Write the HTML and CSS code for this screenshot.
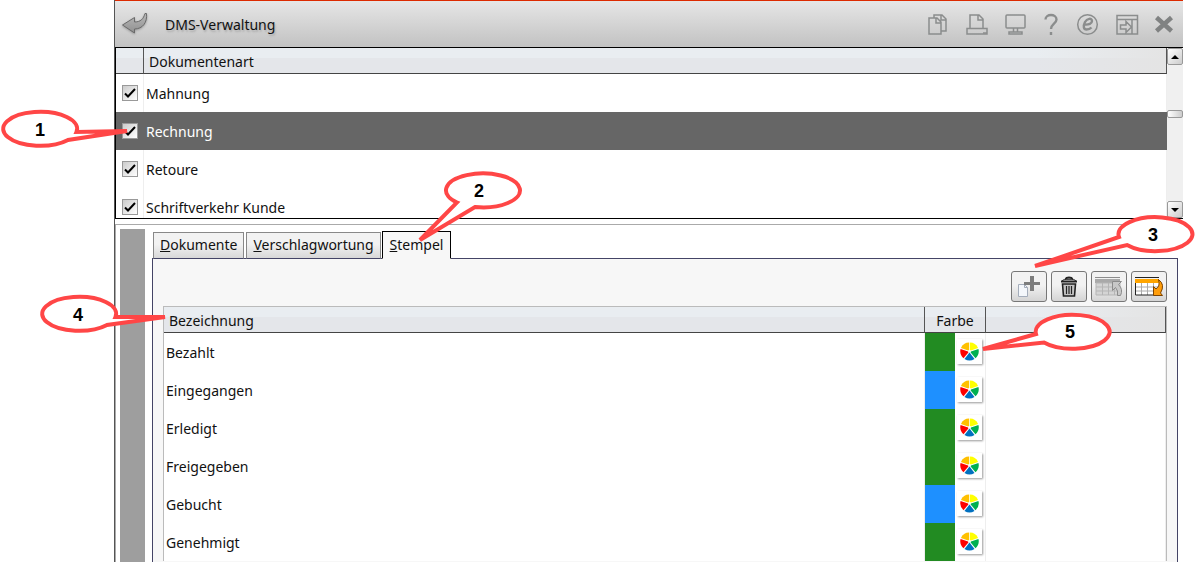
FILE: index.html
```
<!DOCTYPE html>
<html lang="de">
<head>
    <meta charset="UTF-8">
    <meta name="viewport" content="width=device-width, initial-scale=1.0">
    <title>DMS-Verwaltung</title>
    <link rel="stylesheet" href="styles.css">
</head>
<body>
    <svg class="symbols" aria-hidden="true">
        <symbol id="wheel" viewBox="0 0 20 20">
            <path fill="#ffc000" d="M9.600 8.500V.5A9.500 9.500 0 0 0 1 6.200L8.500 9z"/>
            <path fill="#ffff00" d="M10.400 8.500V.5A9.500 9.500 0 0 1 19 6.200L11.500 9z"/>
            <path fill="#ff0000" d="M8.500 10L.6 7.400A9.500 9.500 0 0 0 3.700 17L8.800 11z"/>
            <path fill="#00b050" d="M11.500 10L19.400 7.400A9.500 9.500 0 0 1 16.300 17L11.200 11z"/>
            <path fill="#0070c0" d="M10 11L4.700 17.800A9.500 9.500 0 0 0 15.300 17.800z"/>
        </symbol>
    </svg>

    <main class="window">
        <header class="titlebar">
            <button class="back" aria-label="Zurück">
                <svg width="28" height="24" viewBox="0 0 28 24">
                    <defs>
                        <linearGradient id="arrow" x1="0" y1="0" x2="0" y2="1">
                            <stop offset="0" stop-color="#b8b8b8"/>
                            <stop offset="1" stop-color="#909090"/>
                        </linearGradient>
                    </defs>
                    <path d="M1.500 13L13.500 5.500V10c6 0 9-3 10.500-8.500h1.500c1 9-4 15.500-12 15.500v4z" fill="url(#arrow)" stroke="#6a6a6a"/>
                </svg>
            </button>
            <h1>DMS-Verwaltung</h1>
            <div class="actions">
                <button aria-label="Kopieren">
                    <svg viewBox="0 0 28 28">
                        <path d="M12 8V5h8l4 4v12h-5M19 5v5h5M7 8h8l4 4v12H7zM14 8v5h5"/>
                    </svg>
                </button>
                <button aria-label="Drucken">
                    <svg viewBox="0 0 28 28">
                        <path d="M10 18V5h9l4 4v9M18 5v5h5M7 18.500h20V24H7z"/>
                        <path d="M23 23h4"/>
                    </svg>
                </button>
                <button aria-label="Bildschirm">
                    <svg viewBox="0 0 28 28">
                        <rect x="8" y="5" width="19" height="13" rx="1"/>
                        <path d="M15.500 18v4M19.500 18v4M11 22h13v2H11z"/>
                    </svg>
                </button>
                <button aria-label="Hilfe">
                    <svg viewBox="0 0 28 28">
                        <path class="thick" d="M9.500 9.500c0-6 11-6 11 0 0 4-5.500 4.500-5.500 9.500M15 22v3"/>
                    </svg>
                </button>
                <button aria-label="Online">
                    <svg viewBox="0 0 28 28">
                        <circle cx="13.500" cy="14.500" r="9.800"/>
                        <path class="thick" d="M10 14.500c5 .5 8-1 8-3.500 0-3.500-5-2.500-7 1-2 4-1.500 7.500 1.500 7.500 2 0 3.500-.5 5-2"/>
                    </svg>
                </button>
                <button aria-label="Fenster">
                    <svg viewBox="0 0 28 28">
                        <path d="M5 5.500h20.500V24H5zM5 9.500h20.500M20 9.500V24M8.500 15H14v-3.500l5.500 5.500-5.500 5.500V19H8.500z"/>
                    </svg>
                </button>
                <button aria-label="Schließen">
                    <svg viewBox="0 0 28 28">
                        <path class="cross" d="M6.500 7.500l15 13.500M21.500 7.500l-15 13.500"/>
                    </svg>
                </button>
            </div>
        </header>

        <section class="types">
            <div class="types-list">
                <table class="grid">
                    <colgroup>
                        <col class="col-check">
                        <col>
                    </colgroup>
                    <thead>
                        <tr><th></th><th>Dokumentenart</th></tr>
                    </thead>
                    <tbody>
                        <tr>
                            <td><input type="checkbox" id="mahnung" checked></td>
                            <td><label for="mahnung">Mahnung</label></td>
                        </tr>
                        <tr class="selected">
                            <td><input type="checkbox" id="rechnung" checked></td>
                            <td><label for="rechnung">Rechnung</label></td>
                        </tr>
                        <tr>
                            <td><input type="checkbox" id="retoure" checked></td>
                            <td><label for="retoure">Retoure</label></td>
                        </tr>
                        <tr>
                            <td><input type="checkbox" id="schrift" checked></td>
                            <td><label for="schrift">Schriftverkehr Kunde</label></td>
                        </tr>
                    </tbody>
                </table>
            </div>
            <div class="scrollbar">
                <button aria-label="Nach oben"><svg width="8" height="4" viewBox="0 0 8 4"><path d="M0 4l4-4 4 4z"/></svg></button>
                <div class="track"><div class="thumb"></div></div>
                <button aria-label="Nach unten"><svg width="8" height="4" viewBox="0 0 8 4"><path d="M0 0h8L4 4z"/></svg></button>
            </div>
        </section>

        <section class="details">
            <div class="splitter"></div>
            <div class="tabbed">
                <div class="tabs" role="tablist">
                    <button role="tab"><u>D</u>okumente</button>
                    <button role="tab"><u>V</u>erschlagwortung</button>
                    <button role="tab" class="active" aria-selected="true"><u>S</u>tempel</button>
                </div>
                <div class="panel">
                    <div class="tools">
                        <button aria-label="Neu" disabled>
                            <svg width="28" height="26" viewBox="0 0 28 26">
                                <path d="M3.500 10.500h6l3 3v9h-9z" fill="#f4f7fb" stroke="#a4adbb"/>
                                <path d="M9.500 10.500v3h3" fill="none" stroke="#a4adbb"/>
                                <path d="M15 2h4v6h6v3h-6v6h-4v-6H9V8h6z" fill="#7d7d7d"/>
                            </svg>
                        </button>
                        <button aria-label="Löschen">
                            <svg width="28" height="26" viewBox="0 0 28 26">
                                <path d="M6 7.500h16M10.500 5c1-2 6-2 7 0" fill="none" stroke="#222" stroke-width="2"/>
                                <path d="M7 7c1-2.500 13-2.500 14 0" fill="#888" stroke="#222"/>
                                <path d="M7.500 10h13l-1 12h-11z" fill="#c4c4c4" stroke="#222" stroke-width="1.600"/>
                                <path d="M11.500 12v8M14 12v8M16.500 12v8" stroke="#222" stroke-width="1.200"/>
                            </svg>
                        </button>
                        <button aria-label="Tabelle laden" disabled>
                            <svg width="28" height="26" viewBox="0 0 28 26">
                                <path d="M0 3h25v1H0z" fill="#8c8c8c"/>
                                <path d="M0 5h25v4H0z" fill="#a9a9a9"/>
                                <path d="M1 9h24v12H1zM1 13h24M1 17h24M7.500 9v12M13.500 9v12M19.500 9v12" fill="#d4d4d4" stroke="#b5b5b5"/>
                                <path d="M17.500 7.500h9l-3 3q5 5 2 11h-3q1-5-2-8l-3 3z" fill="#c8c8c8" stroke="#8c8c8c"/>
                            </svg>
                        </button>
                        <button aria-label="Tabelle speichern">
                            <svg width="28" height="26" viewBox="0 0 28 26">
                                <path d="M0 3h24v1H0z" fill="#222"/>
                                <path d="M0 5h24v4H0z" fill="#ffa500"/>
                                <path d="M1 9h23v12H1z" fill="#fff"/>
                                <path d="M0 13h24M0 17h24M6.500 9v12M12.500 9v12M18.500 9v12" stroke="#aaa"/>
                                <path d="M.5 9v12H24" fill="none" stroke="#222"/>
                                <path d="M23.500 5.500q7 5 2 13.500l2 2.500h-9v-9l2.500 2.500q4.500-3 2.500-9.500z" fill="#ff9d0a" stroke="#7d4300"/>
                            </svg>
                        </button>
                    </div>
                    <table class="grid stamps">
                        <colgroup>
                            <col>
                            <col class="col-color">
                            <col class="col-rest">
                        </colgroup>
                        <thead>
                            <tr><th>Bezeichnung</th><th class="center">Farbe</th><th></th></tr>
                        </thead>
                        <tbody>
                            <tr>
                                <td>Bezahlt</td>
                                <td><div class="color green"><button aria-label="Farbe wählen"><svg><use href="#wheel"/></svg></button></div></td>
                                <td></td>
                            </tr>
                            <tr>
                                <td>Eingegangen</td>
                                <td><div class="color blue"><button aria-label="Farbe wählen"><svg><use href="#wheel"/></svg></button></div></td>
                                <td></td>
                            </tr>
                            <tr>
                                <td>Erledigt</td>
                                <td><div class="color green"><button aria-label="Farbe wählen"><svg><use href="#wheel"/></svg></button></div></td>
                                <td></td>
                            </tr>
                            <tr>
                                <td>Freigegeben</td>
                                <td><div class="color green"><button aria-label="Farbe wählen"><svg><use href="#wheel"/></svg></button></div></td>
                                <td></td>
                            </tr>
                            <tr>
                                <td>Gebucht</td>
                                <td><div class="color blue"><button aria-label="Farbe wählen"><svg><use href="#wheel"/></svg></button></div></td>
                                <td></td>
                            </tr>
                            <tr>
                                <td>Genehmigt</td>
                                <td><div class="color green"><button aria-label="Farbe wählen"><svg><use href="#wheel"/></svg></button></div></td>
                                <td></td>
                            </tr>
                        </tbody>
                    </table>
                </div>
            </div>
        </section>
    </main>

    <!-- numbered callouts -->
    <svg class="callouts" width="1195" height="562" viewBox="0 0 1195 562">
        <path d="M68 140A37 17 0 1 1 76.500 132L127 131z"/>
        <path d="M457 202.500A37 17 0 1 1 475 207L420 240z"/>
        <path d="M1119 237A37 17 0 1 1 1127 245L1035 266z"/>
        <path d="M107 325A37 17 0 1 1 115.500 317L165 317z"/>
        <path d="M1036 334A37 17 0 1 1 1044 342.500L983 349z"/>
        <text x="40" y="136">1</text>
        <text x="479" y="197">2</text>
        <text x="1153" y="241">3</text>
        <text x="78" y="321">4</text>
        <text x="1070" y="338">5</text>
    </svg>
</body>
</html>
```
FILE: styles.css
```
* {
    box-sizing: border-box;
}
body {
    margin: 0;
    overflow: hidden;
    background-color: #fff;
    color: #111;
    font-family: 'Segoe UI', 'Noto Sans', sans-serif;
    font-size: 14px;
}
button {
    font: inherit;
    color: inherit;
    padding: 0;
    border: none;
    background: none;
}
.symbols {
    display: none;
}
.window {
    display: flex;
    flex-direction: column;
    height: 100vh;
    margin: 0 12px 0 114px;
    border-left: 1px solid #555;
}

/* title bar */
.titlebar {
    display: flex;
    align-items: center;
    flex: none;
    height: 48px;
    padding: 0 5px 0 6px;
    border-top: 1px solid #dc2a00;
    border-bottom: 1px solid #000;
    background: linear-gradient(#e6e6e6, #c2c2c2);
}
.titlebar h1 {
    margin: 0 0 0 16px;
    font-size: 14px;
    font-weight: normal;
    text-shadow: 1px 2px 2px #aaa;
}
.back svg {
    display: block;
    filter: drop-shadow(0 1px 1px #999);
}
.actions {
    display: flex;
    gap: 10px;
    margin-left: auto;
}
.actions svg {
    display: block;
    width: 28px;
    height: 28px;
    fill: none;
    stroke: #8b8d8d;
    stroke-width: 1.5;
}
.actions .thick {
    stroke-width: 2.4;
}
.actions .cross {
    stroke: #808282;
    stroke-width: 4.5;
}

/* tables */
.grid {
    width: 100%;
    table-layout: fixed;
    border-collapse: separate;
    border-spacing: 0;
}
.grid th {
    height: 26px;
    padding: 2px 5px 0;
    border-right: 1px solid #555;
    border-bottom: 1px solid #444;
    background: linear-gradient(#e9edf1 40%, #e4e6ea 40%);
    font-weight: normal;
    text-align: left;
}
.grid th:last-child {
    background: linear-gradient(90deg, transparent calc(100% - 130px), #e4e4e4), linear-gradient(#e9edf1 40%, #e4e6ea 40%);
}
.grid th.center {
    text-align: center;
}
.grid td {
    height: 38px;
    padding: 0 2px;
    border-right: 1px solid #eee;
}
.grid .selected td {
    border-color: #666;
    background-color: #666;
    color: #fff;
}
.col-check {
    width: 28px;
}
.col-color {
    width: 61px;
}
.col-rest {
    width: 180px;
}
.types {
    display: flex;
    flex: none;
    height: 171px;
    border-left: 1px solid #000;
    border-bottom: 1px solid #000;
}
.types-list {
    flex: 1;
    overflow: hidden;
}
input[type="checkbox"] {
    display: block;
    appearance: none;
    width: 16px;
    height: 16px;
    margin: 0 0 0 4px;
    border: 1px solid #999;
    background: url("data:image/svg+xml,%3Csvg xmlns='http://www.w3.org/2000/svg' viewBox='0 0 14 14'%3E%3Cpath d='M2 7.500l3 3L12 3' fill='none' stroke='%23000' stroke-width='2'/%3E%3C/svg%3E"), linear-gradient(135deg, #ccc, #fff);
}

/* scrollbar */
.scrollbar {
    display: flex;
    flex-direction: column;
    width: 16px;
}
.scrollbar button {
    display: flex;
    align-items: center;
    justify-content: center;
    height: 17px;
    border: 1px solid #999;
    border-radius: 2px;
    background: linear-gradient(135deg, #fff, #ccc);
}
.track {
    flex: 1;
    padding-top: 45px;
    background-color: #f0f0f0;
}
.thumb {
    height: 8px;
    border: 1px solid #999;
    border-radius: 2px;
    background: linear-gradient(90deg, #fff, #ccc);
}

/* lower part */
.details {
    display: flex;
    flex: 1;
    gap: 7px;
    min-height: 0;
    margin-top: 5px;
    padding: 4px 5px 0;
    border-top: 1px solid #aaa;
    border-left: 1px solid #aaa;
}
.splitter {
    width: 25px;
    margin-left: -1px;
    background-color: #9e9e9e;
}
.tabbed {
    display: flex;
    flex: 1;
    flex-direction: column;
    padding-top: 2px;
}
.tabs {
    display: flex;
    align-items: flex-end;
    gap: 2px;
    margin-bottom: -1px;
    padding-left: 1px;
    z-index: 1;
}
.tabs button {
    height: 27px;
    padding: 0 6px 2px;
    border: 1px solid #888;
    border-bottom-color: #446;
    background: linear-gradient(#f2f2f2 45%, #d8d8d8);
}
.tabs .active {
    height: 28px;
    margin-left: -1px;
    padding: 0 7px 2px;
    border-color: #000;
    border-bottom-color: #f7f7f7;
    background: #f7f7f7;
}
.panel {
    flex: 1;
    padding: 12px 10px 0;
    border: 1px solid #446;
    border-bottom: none;
    background-color: #f7f7f7;
}
.tools {
    display: flex;
    justify-content: flex-end;
    gap: 4px;
    margin-bottom: 4px;
}
.tools button {
    display: flex;
    align-items: center;
    justify-content: center;
    width: 36px;
    height: 31px;
    border: 1px solid #777;
    border-radius: 3px;
    background: linear-gradient(#f2f2f2 45%, #d4d4d4);
}
.stamps {
    border: 1px solid #bbb;
    border-bottom: none;
    background-color: #fff;
}
.color {
    display: flex;
    align-items: center;
    justify-content: flex-end;
    height: 38px;
    margin-left: -2px;
    padding-bottom: 2px;
    border-left: 30px solid;
}
.color.green {
    border-color: #228b22;
}
.color.blue {
    border-color: #1e90ff;
}
.color button {
    display: flex;
    align-items: center;
    justify-content: center;
    width: 25px;
    height: 25px;
    margin-right: 1px;
    background-color: #fff;
    box-shadow: 1px 1px 2px #999;
}
.color svg {
    width: 19px;
    height: 19px;
}

/* callouts */
.callouts {
    position: absolute;
    top: 0;
    left: 0;
    z-index: 2;
    pointer-events: none;
}
.callouts path {
    fill: #fff;
    stroke: #ff4646;
    stroke-width: 4;
}
.callouts text {
    fill: #000;
    font: bold 18px 'Liberation Sans', Arial, sans-serif;
    text-anchor: middle;
}
```
